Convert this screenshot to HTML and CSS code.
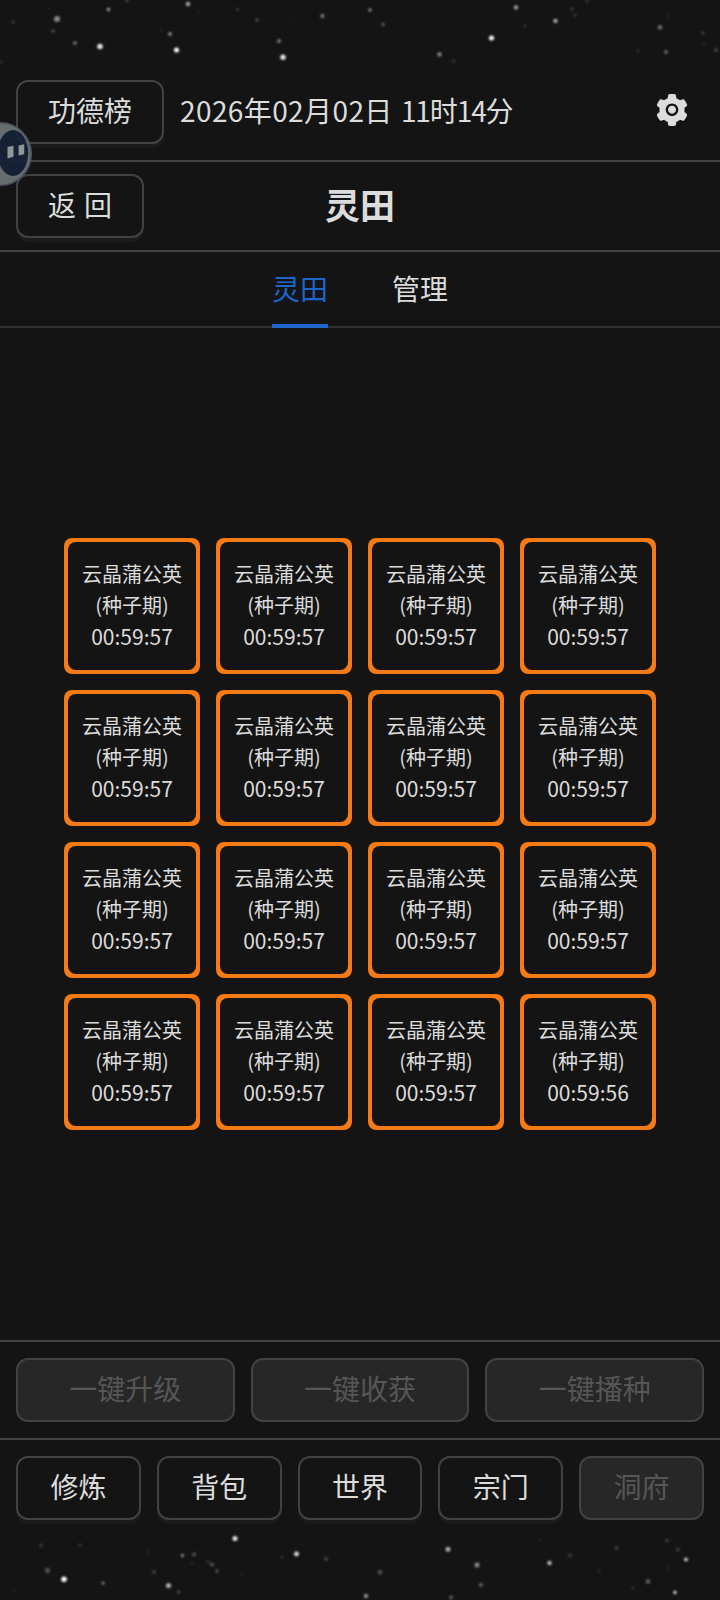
FILE: index.html
```html
<!DOCTYPE html>
<html lang="zh-CN">
<head>
    <meta charset="UTF-8">
    <meta name="viewport" content="width=device-width, initial-scale=1.0">
    <title>灵田</title>
    <link rel="stylesheet" href="styles.css">
</head>
<body>
    <div class="app">
        <svg class="stars" viewBox="0 0 720 64" id="starsTop"></svg>

        <header class="header">
            <button class="btn">功德榜</button>
            <span class="date">2026年02月02日 <span class="clock">11时14分</span></span>
            <svg class="gear" viewBox="64 64 896 896"><path d="M512.5 390.6c-29.9 0-57.9 11.6-79.1 32.8-21.1 21.2-32.8 49.2-32.8 79.1 0 29.9 11.7 57.9 32.8 79.1 21.2 21.1 49.2 32.8 79.1 32.8 29.9 0 57.9-11.7 79.1-32.8 21.1-21.2 32.8-49.2 32.8-79.1 0-29.9-11.7-57.9-32.8-79.1a110.96 110.96 0 00-79.1-32.8zm412.3 235.5l-65.4-55.9c3.1-19 4.7-38.4 4.7-57.7s-1.6-38.8-4.7-57.7l65.4-55.9a32.03 32.03 0 009.3-35.2l-.9-2.6a442.5 442.5 0 00-79.6-137.7l-1.8-2.1a32.12 32.12 0 00-35.1-9.5l-81.2 28.9c-30-24.6-63.4-44-99.6-57.5l-15.7-84.9a32.05 32.05 0 00-25.8-25.7l-2.7-.5c-52-9.4-106.8-9.4-158.8 0l-2.7.5a32.05 32.05 0 00-25.8 25.7l-15.8 85.3a353.44 353.44 0 00-98.9 57.3l-81.8-29.1a32 32 0 00-35.1 9.5l-1.8 2.1a445.93 445.93 0 00-79.6 137.7l-.9 2.6c-4.5 12.5-.8 26.5 9.3 35.2l66.2 56.5c-3.1 18.8-4.6 38-4.6 57 0 19.2 1.5 38.4 4.6 57l-66 56.5a32.03 32.03 0 00-9.3 35.2l.9 2.6c18.1 50.3 44.8 96.8 79.6 137.7l1.8 2.1a32.12 32.12 0 0035.1 9.5l81.8-29.1c29.8 24.5 63 43.9 98.9 57.3l15.8 85.3a32.05 32.05 0 0025.8 25.7l2.7.5a448.27 448.27 0 00158.8 0l2.7-.5a32.05 32.05 0 0025.8-25.7l15.7-84.9c36.2-13.6 69.6-32.9 99.6-57.5l81.2 28.9a32 32 0 0035.1-9.5l1.8-2.1c34.8-41.1 61.5-87.4 79.6-137.7l.9-2.6c4.3-12.4.6-26.3-9.5-35zm-412.3 52.2c-97.1 0-175.8-78.7-175.8-175.8s78.7-175.8 175.8-175.8 175.8 78.7 175.8 175.8-78.7 175.8-175.8 175.8z"/></svg>
        </header>

        <div class="title-bar">
            <button class="btn back">返 回</button>
            <h1>灵田</h1>
        </div>

        <nav class="tabs">
            <a class="tab active">灵田</a>
            <a class="tab">管理</a>
        </nav>

        <main class="main">
            <div class="field" id="field"></div>
        </main>

        <div class="actions">
            <button class="btn" disabled>一键升级</button>
            <button class="btn" disabled>一键收获</button>
            <button class="btn" disabled>一键播种</button>
        </div>

        <nav class="actions">
            <button class="btn">修炼</button>
            <button class="btn">背包</button>
            <button class="btn">世界</button>
            <button class="btn">宗门</button>
            <button class="btn" disabled>洞府</button>
        </nav>

        <svg class="stars" viewBox="0 0 720 64" id="starsBottom"></svg>

        <!-- 悬浮球 -->
        <svg class="float-ball" viewBox="0 0 34 68">
            <circle class="ball" cx="0" cy="34" r="31.3"/>
            <ellipse class="face" cx="13" cy="33" rx="15.2" ry="23"/>
            <path class="eye" d="M7.5 27l6-1.2v11l-6 1.6zM18.6 25.4l5.6-1.2v10l-5.6 1.4z"/>
        </svg>
    </div>

    <script>
        // x, y, 半径, 透明度
        const topStars = [
            [13, 22, 2, .15], [57, 19, 3.3, .5], [53, 31, 2, .25], [75, 43, 2.2, .38], [100, 46.5, 3.1, .9],
            [108.5, 9.5, 2, .6], [127, 0, 2, .4], [188, 4, 2.6, .6], [170, 34, 2.2, .5], [176.5, 50, 2.8, 1],
            [237.5, 9.5, 2, .15], [257, 20, 2.3, .2], [279, 41, 2.2, .45], [283, 57.2, 3, .9], [322.5, 16, 2.4, .4],
            [1, 62, 2, .12], [49, 8, 2, .05], [199, 12, 2, .04], [161, 31, 1.5, .08], [294, 19, 1.5, .06],
            [370, 10, 2.2, .4], [383, 24.5, 2.1, .25], [439.5, 54.5, 2.4, .5], [453.5, 61, 2.3, .12], [516, 7.5, 2.4, .6],
            [491.5, 38, 2.8, 1], [525, 25.5, 1.8, .15], [555.5, 21, 2.4, .65], [572, 9, 1.8, .2], [575, 15.5, 1.6, .2],
            [587, 1, 2, .15], [660, 27.3, 2.5, .4], [666, 52, 2.3, .35], [638, 51, 2, .1], [703, 33, 1.6, .25],
            [704, 44, 1.8, .1], [716, 50, 2.2, .22], [668, 16, 2, .06]
        ];
        const bottomStars = [
            [41, 9.5, 2.5, .12], [80, 9, 1.7, .2], [47.5, 34.5, 3, .25], [64, 43.3, 3.1, 1], [103, 47, 1.8, .5],
            [15, 54, 2, .05], [148, 16, 2, .06], [182.5, 19.5, 2, .45], [194, 18.5, 2.6, .22], [192, 27, 1.8, .12],
            [154, 36, 2.1, .2], [168.5, 49.5, 2.9, .65], [178.5, 56, 2, .22], [208, 26, 2, .14], [212, 28.5, 2.3, .25],
            [217, 35, 1.7, .35], [235, 2.5, 2.8, .9], [242, 38, 1.5, .1], [282, 21, 1.8, .15], [296.5, 18, 2.7, .85],
            [326, 23, 2.3, .2], [380, 36.3, 2.7, .25], [366, 60, 2.4, .55], [448, 13.2, 2.8, .65], [477, 29, 2.8, .5],
            [481, 49, 2.4, .3], [451, 61.5, 2.5, .25], [540, 4.5, 2, .06], [549.5, 27, 2.5, .7], [570, 19.5, 2.4, .15],
            [616.5, 11.8, 2.5, .16], [599, 35, 2.1, .07], [667, 4.5, 2, .2], [678, 13.5, 2.2, .18], [686, 23.5, 2.3, .7],
            [668, 32, 1.8, .07], [648, 45.5, 2.5, .35], [633, 52, 1.8, .14], [675, 56.5, 2, .8]
        ];

        function drawStars(id, stars) {
            document.getElementById(id).innerHTML = stars.map(([x, y, r, o]) =>
                `<circle cx="${x}" cy="${y}" r="${r * 0.9}" opacity="${o}"/>`
            ).join("");
        }

        drawStars("starsTop", topStars);
        drawStars("starsBottom", bottomStars);

        let plots = "";
        for (let i = 0; i < 16; i++) {
            const time = i === 15 ? "00:59:56" : "00:59:57";
            plots += `<div class="plot"><div class="plot-inner"><span>云晶蒲公英</span><span>(种子期)</span><span class="time">${time}</span></div></div>`;
        }
        document.getElementById("field").innerHTML = plots;
    </script>
</body>
</html>
```
FILE: styles.css
```css
* {
    box-sizing: border-box;
}
body {
    margin: 0;
    background: #141414;
    color: #dcdcdc;
    font-family: "Noto Sans CJK SC", sans-serif;
    font-size: 28px;
}
.app {
    position: relative;
    display: flex;
    flex-direction: column;
    height: 1600px;
    overflow: hidden;
}
.stars {
    display: block;
    width: 720px;
    height: 64px;
    flex: none;
    fill: #fff;
    filter: blur(0.8px);
}
.btn {
    height: 64px;
    padding: 0 30px 4px;
    border: 2px solid #424242;
    border-radius: 12px;
    background: #141414;
    box-shadow: 0 4px 0 #1b1b1b;
    color: #dcdcdc;
    font-family: inherit;
    font-size: 28px;
    line-height: 44px;
    white-space: nowrap;
}
.btn:disabled {
    background: #272727;
    box-shadow: none;
    color: #565656;
}
.back {
    word-spacing: 1.7px;
}
.header {
    display: flex;
    align-items: center;
    height: 98px;
    padding: 0 32px 0 16px;
    border-bottom: 2px solid #424242;
}
.date {
    margin-left: 16px;
    padding-bottom: 4px;
    letter-spacing: 0.4px;
    word-spacing: 1.5px;
}
.clock {
    letter-spacing: -1.1px;
}
.gear {
    width: 32px;
    height: 32px;
    margin-left: auto;
    margin-bottom: 4px;
    fill: #dcdcdc;
}
.title-bar {
    display: grid;
    grid-template-columns: 1fr auto 1fr;
    align-items: center;
    justify-items: start;
    height: 90px;
    padding: 0 16px;
    border-bottom: 2px solid #424242;
}
.title-bar h1 {
    margin: 0;
    padding-bottom: 4px;
    font-size: 35px;
    line-height: 48px;
}
.tabs {
    display: flex;
    justify-content: center;
    gap: 64px;
    height: 76px;
    box-shadow: inset 0 -2px 0 #303030;
}
.tab {
    height: 76px;
    line-height: 72px;
}
.tab.active {
    color: #1d66cc;
    border-bottom: 4px solid #1d66cc;
}
.main {
    flex: 1;
    display: flex;
    align-items: center;
    justify-content: center;
}
.field {
    display: grid;
    grid-template-columns: repeat(4, 136px);
    gap: 16px;
}
.plot {
    height: 136px;
    padding: 4px;
    border-radius: 8px;
    background: #f47a18;
}
.plot-inner {
    display: flex;
    flex-direction: column;
    align-items: center;
    justify-content: center;
    height: 100%;
    padding-bottom: 2px;
    border-radius: 8px;
    background: #141414;
    font-size: 20px;
    line-height: 31.4px;
}
.time {
    font-size: 21px;
}
.actions {
    display: flex;
    gap: 16px;
    padding: 16px;
    border-top: 2px solid #424242;
}
.actions .btn {
    flex: 1 1 0;
    padding: 0 0 4px;
}
.float-ball {
    position: absolute;
    left: 0;
    top: 120px;
    width: 34px;
    height: 68px;
    opacity: 0.93;
}
.ball {
    fill: #6e7374;
    stroke: #4d5868;
    stroke-width: 1.5;
}
.face {
    fill: #182238;
}
.eye {
    fill: #9a9fa3;
}
```
